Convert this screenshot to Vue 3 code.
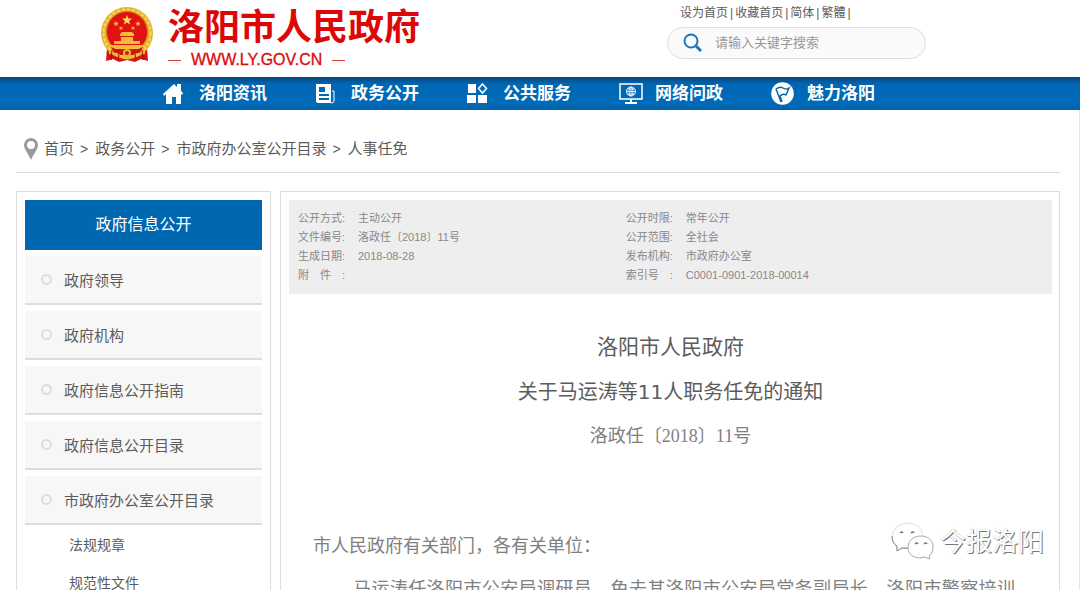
<script setup>
const topLinks = ['设为首页', '收藏首页', '简体', '繁體']
const navItems = [
  { icon: 'home', text: '洛阳资讯' },
  { icon: 'news', text: '政务公开' },
  { icon: 'grid', text: '公共服务' },
  { icon: 'screen', text: '网络问政' },
  { icon: 'flag', text: '魅力洛阳' },
]
const crumbs = ['首页', '政务公开', '市政府办公室公开目录', '人事任免']
const sections = ['政府领导', '政府机构', '政府信息公开指南', '政府信息公开目录', '市政府办公室公开目录']
const subItems = ['法规规章', '规范性文件']
const metaColumns = [
  [
    ['公开方式:', '主动公开'],
    ['文件编号:', '洛政任〔2018〕11号'],
    ['生成日期:', '2018-08-28'],
    ['附　件　:', ''],
  ],
  [
    ['公开时限:', '常年公开'],
    ['公开范围:', '全社会'],
    ['发布机构:', '市政府办公室'],
    ['索引号　:', 'C0001-0901-2018-00014'],
  ],
]
</script>

<template>
  <div class="page">
    <header class="header">
      <a class="brand" href="#">
        <svg class="emblem" viewBox="0 0 54 56" aria-hidden="true">
          <path d="M7 41 L6 54 L13 52 L19 55 L27 53 L35 55 L41 52 L48 54 L47 41Z" fill="#d81414" />
          <circle cx="27" cy="26" r="26" fill="#e9b32d" />
          <circle cx="27" cy="26" r="23.5" fill="none" stroke="#f8d768" stroke-width="2" stroke-dasharray="3 2" />
          <circle cx="27" cy="25" r="20.5" fill="#e01212" stroke="#c98516" stroke-width="1" />
          <path d="M27 8l1.3 3.6h3.8l-3 2.3 1.1 3.7-3.2-2.2-3.2 2.2 1.1-3.7-3-2.3h3.8z" fill="#fbdc5a" />
          <g fill="#f4ba38">
            <path d="M16 14l.8 1.8h2l-1.5 1.3.5 2-1.8-1.1-1.8 1.1.5-2-1.5-1.3h2z" />
            <path d="M38 14l.8 1.8h2l-1.5 1.3.5 2-1.8-1.1-1.8 1.1.5-2-1.5-1.3h2z" />
            <path d="M21 19l.7 1.4h1.6l-1.2 1 .4 1.6-1.5-.9-1.5.9.4-1.6-1.2-1h1.6z" />
            <path d="M33 19l.7 1.4h1.6l-1.2 1 .4 1.6-1.5-.9-1.5.9.4-1.6-1.2-1h1.6z" />
            <path d="M20 27l2-2h10l2 2v2H20zM21 30h12v4H21zM14 34h26v3H14zM10 38h34v2l-3 2H13l-3-2z" />
          </g>
          <path d="M11 40 Q27 48 43 40 L40 46 Q27 51 14 46Z" fill="#c91616" />
          <circle cx="27" cy="46" r="4" fill="#eab52f" />
          <circle cx="27" cy="46" r="2" fill="#d21a12" />
          <path d="M9 46 Q17 46 22 50 Q27 53 32 50 Q37 46 45 46" fill="none" stroke="#efba34" stroke-width="2" />
          <path d="M12 43l-1 10M19 47l-1 6M35 47l1 6M42 43l1 10" stroke="#a90c0c" stroke-width="1" />
        </svg>
        <span class="brand-text">
          <span class="brand-name">洛阳市人民政府</span>
          <span class="brand-url">WWW.LY.GOV.CN</span>
        </span>
      </a>
      <div class="tools">
        <div class="top-links">
          <template v-for="link in topLinks" :key="link">
            <a href="#">{{ link }}</a><span>|</span>
          </template>
        </div>
        <form class="search" @submit.prevent>
          <button type="submit" aria-label="搜索">
            <svg viewBox="0 0 20 20" aria-hidden="true">
              <circle cx="8" cy="8" r="6.5" fill="none" stroke="#1d76b9" stroke-width="2" />
              <path d="M13 13l5 5" stroke="#1d76b9" stroke-width="3" />
            </svg>
          </button>
          <input type="text" aria-label="请输入关键字搜索" placeholder="请输入关键字搜索" />
        </form>
      </div>
    </header>

    <nav class="nav">
      <a v-for="item in navItems" :key="item.text" href="#">
        <svg viewBox="0 0 24 24" aria-hidden="true">
          <g v-if="item.icon === 'home'" fill="#fff">
            <path d="M0 12L11 2l3 3V2h4v7l2 2-1 2-1-1v10h-5v-7H9v7H3V12l-2 2z" />
          </g>
          <g v-else-if="item.icon === 'news'">
            <path d="M1 2h15v19H3a2 2 0 0 1-2-2z" fill="#fff" />
            <path d="M17 9h2v10q0 2-3 2" fill="none" stroke="#fff" stroke-width="1" />
            <path d="M4 5h6v5H4zM4 12h10v2H4zM4 16h10v2H4z" fill="#0067b4" />
          </g>
          <g v-else-if="item.icon === 'grid'">
            <path d="M1 2h8v9H1zM0 13h9v8H0zM11 13h9v8h-9z" fill="#fff" />
            <path d="M15.500 2l4 4.500-4 4.500-4-4.500z" fill="none" stroke="#fff" stroke-width="1.500" />
          </g>
          <g v-else-if="item.icon === 'screen'" fill="none" stroke="#fff">
            <path d="M1 2h22v15H1z" stroke-width="1.500" />
            <path d="M12 17v4M6 21h12" stroke-width="2" />
            <circle cx="12" cy="9.500" r="4.500" />
            <path d="M7.500 9.500h9M12 5v9M8.500 7h7M8.500 12h7" stroke-width=".8" />
            <ellipse cx="12" cy="9.500" rx="2" ry="4.500" stroke-width=".8" />
          </g>
          <g v-else>
            <circle cx="11.500" cy="11.500" r="11.300" fill="#fff" />
            <path d="M5 7q4-3 7-1t6 0l-3 7q-3-2-6 1l2 6" fill="none" stroke="#0067b4" stroke-width="1.500" />
            <path d="M5 7l5 13" stroke="#0067b4" stroke-width="1.500" />
          </g>
        </svg>
        <span>{{ item.text }}</span>
      </a>
    </nav>

    <div class="body">
      <div class="crumbs">
        <svg viewBox="0 0 14 22" aria-hidden="true">
          <path fill-rule="evenodd" fill="#999" d="M7 0a7 7 0 0 1 7 7c0 4-4 8-7 15C4 15 0 11 0 7a7 7 0 0 1 7-7zm0 3a4 4 0 1 0 0 8 4 4 0 0 0 0-8z" />
        </svg>
        <template v-for="(crumb, i) in crumbs" :key="crumb">
          <span v-if="i" class="sep">&gt;</span>
          <a href="#">{{ crumb }}</a>
        </template>
      </div>

      <div class="columns">
        <aside class="sidebar">
          <h2>政府信息公开</h2>
          <a v-for="section in sections" :key="section" class="section" href="#"><i></i>{{ section }}</a>
          <a v-for="sub in subItems" :key="sub" class="sub" href="#">{{ sub }}</a>
        </aside>

        <main class="main">
          <div class="meta">
            <dl v-for="(column, c) in metaColumns" :key="c">
              <div v-for="row in column" :key="row[0]">
                <dt>{{ row[0] }}</dt>
                <dd>{{ row[1] }}</dd>
              </div>
            </dl>
          </div>
          <article>
            <h1>洛阳市人民政府</h1>
            <h3>关于马运涛等11人职务任免的通知</h3>
            <p class="number">洛政任〔2018〕11号</p>
            <p class="address">市人民政府有关部门，各有关单位：</p>
            <p class="text">马运涛任洛阳市公安局调研员，免去其洛阳市公安局常务副局长、洛阳市警察培训学校校长职务。</p>
          </article>
          <div class="watermark">
            <svg viewBox="0 0 44 40" aria-hidden="true">
              <g fill="#fff" stroke-width="1">
                <path d="M6 29l-1-5C-2 17 1 5 12 2c10-3 20 3 20 13 0 8-8 12-16 11l-5-1z" stroke="#ddd" />
                <path d="M1 14q0 7 5 10v5l5-3q3 1 6 0" fill="none" stroke="#888" />
                <path d="M39 37l-6-2c-8 3-16-2-16-9 0-8 6-12 13-12 8 0 13 6 12 12 0 3-1 5-4 8z" stroke="#aaa" />
              </g>
              <path d="M9 11q2-2 3 0M20 11q2-2 3 0M24 22q2-2 3 0M33 22q2-2 3 0" fill="none" stroke="#777" stroke-width="1.500" />
            </svg>
            <span>今报洛阳</span>
          </div>
        </main>
      </div>
    </div>
  </div>
</template>

<style>
html { scrollbar-width: none; }
body { margin: 0; background: #fff; }
</style>

<style scoped>
* { box-sizing: border-box; }
.page { font-family: "Liberation Sans", "Noto Sans CJK SC", sans-serif; color: #5c5c5c; }
a { color: inherit; text-decoration: none; }
h1, h2, h3, p, dl, dd { margin: 0; font-weight: 400; }

.header { display: flex; justify-content: space-between; height: 77px; padding: 0 154px 0 100px; }
.brand { display: flex; gap: 14px; padding-top: 7px; color: #dc0808; }
.emblem { width: 54px; height: 56px; }
.brand-text { display: flex; flex-direction: column; }
.brand-name { font-size: 36px; line-height: 42px; font-weight: 700; }
.brand-url { display: flex; align-items: center; gap: 10px; font-size: 16px; line-height: 22px; -webkit-text-stroke: 0.3px; }
.brand-url::before, .brand-url::after { content: ""; width: 13px; height: 1px; background: #d84040; }

.tools { width: 259px; padding-top: 4px; }
.top-links { display: flex; gap: 2px; padding-left: 13px; font-size: 12px; line-height: 18px; white-space: nowrap; }
.search { display: flex; align-items: center; gap: 12px; height: 32px; margin-top: 5px; padding: 0 15px; border: 1px solid #ddd; border-radius: 16px; background: #fafafa; }
.search button { display: flex; padding: 0; border: 0; background: none; }
.search svg { width: 20px; height: 20px; }
.search input { flex: 1; min-width: 0; padding: 0; border: 0; outline: 0; background: none; font: 13px/20px "Liberation Sans", "Noto Sans CJK SC", sans-serif; color: #555; }
.search input::placeholder { color: #999; }

.nav { display: flex; height: 33px; padding-left: 163px; background: linear-gradient(#0b4579, #0067b4 7px, #006bb9 26px, #0062aa); }
.nav a { display: flex; align-items: center; gap: 12px; width: 152px; color: #fff; font-size: 17px; line-height: 34px; font-weight: 700; white-space: nowrap; }
.nav svg { width: 24px; height: 24px; }

.body { padding: 16px 19px 0 16px; border-right: 1px solid #e5e5e5; }
.crumbs { display: flex; align-items: center; gap: 6px; height: 47px; padding-left: 8px; border-bottom: 1px solid #ddd; font-size: 15px; line-height: 24px; }
.crumbs svg { width: 14px; height: 22px; }
.crumbs .sep { padding-right: 1px; font-size: 14px; }

.columns { display: flex; gap: 9px; margin-top: 18px; }
.sidebar { flex: none; width: 255px; padding: 8px; border: 1px solid #ddd; border-bottom: 0; }
.sidebar h2 { margin-bottom: 6px; background: #0068b0; color: #fff; font-size: 16px; line-height: 50px; text-align: center; }
.section { display: flex; align-items: center; gap: 12px; height: 49px; margin-bottom: 6px; padding-left: 16px; border-bottom: 2px solid #ddd; background: #f7f7f7; font-size: 15px; }
.section i { width: 11px; height: 11px; border: 2px solid #ddd; border-radius: 50%; }
.sub { display: block; padding-left: 44px; font-size: 14px; line-height: 38px; }
.section + .sub { margin-top: -5px; }

.main { position: relative; flex: 1; min-width: 0; padding: 8px 7px 0 8px; border: 1px solid #ddd; border-bottom: 0; }
.meta { display: grid; grid-template-columns: 10fr 13fr; padding: 9px 0 9px 9px; background: #eee; color: #888; font-size: 11px; line-height: 19px; }
.meta div { display: grid; grid-template-columns: 60px 1fr; height: 19px; }
article { text-align: center; }
h1 { margin-top: 35px; font-size: 21px; line-height: 36px; }
h3 { margin-top: 9px; font-family: "DejaVu Sans", "Noto Sans CJK SC", sans-serif; font-size: 20px; line-height: 36px; }
.number, .address, .text { font-family: "Liberation Serif", "Noto Sans CJK SC", serif; font-size: 18px; line-height: 40px; color: #808080; }
.number { margin-top: 6px; }
.address { margin-top: 70px; padding: 0 36px 0 24px; text-align: left; }
.text { margin-top: 3px; padding: 0 37px 0 24px; text-align: justify; text-indent: 40px; }

.watermark { position: absolute; right: 15px; top: 330px; display: flex; align-items: center; gap: 5px; }
.watermark svg { width: 44px; height: 40px; }
.watermark span { color: #fff; font-size: 26px; line-height: 40px; text-shadow: 1px 1px 0 #777, 0 0 1px #aaa; }
</style>
